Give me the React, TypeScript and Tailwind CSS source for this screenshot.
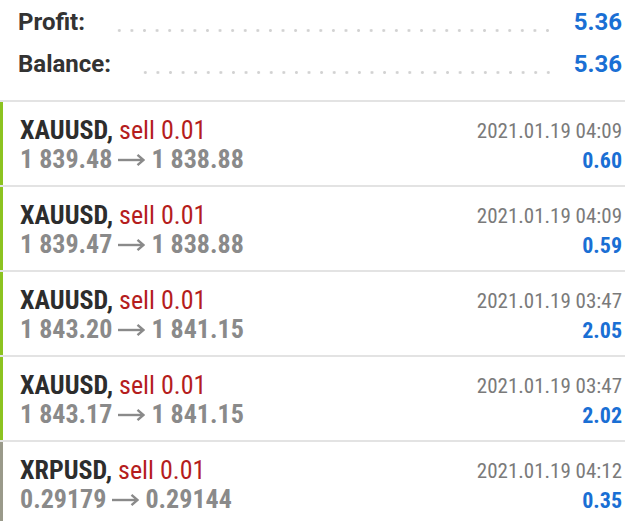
import React from "react";

const rows = [
  { sym: "XAUUSD", open: "1 839.48", close: "1 838.88", date: "2021.01.19 04:09", profit: "0.60", bar: "bg-[#8cc320]" },
  { sym: "XAUUSD", open: "1 839.47", close: "1 838.88", date: "2021.01.19 04:09", profit: "0.59", bar: "bg-[#8cc320]" },
  { sym: "XAUUSD", open: "1 843.20", close: "1 841.15", date: "2021.01.19 03:47", profit: "2.05", bar: "bg-[#8cc320]" },
  { sym: "XAUUSD", open: "1 843.17", close: "1 841.15", date: "2021.01.19 03:47", profit: "2.02", bar: "bg-[#8cc320]" },
  { sym: "XRPUSD", open: "0.29179", close: "0.29144", date: "2021.01.19 04:12", profit: "0.35", bar: "bg-[#9a9a8a]" },
];

function Dots() {
  return (
    <div className="flex-1 ml-[28px] mr-[24px] self-end mb-[8px] h-[3px] bg-[radial-gradient(circle,#d2d2d2_1.2px,transparent_1.7px)] bg-[length:12.6px_3px] bg-repeat-x" />
  );
}

function Arrow() {
  return (
    <svg width="27" height="14" viewBox="0 0 27 14" className="ml-[6px] mr-[6px] mt-[1px]" fill="none" stroke="#8a8a8a" strokeWidth="2.4" strokeLinecap="butt">
      <path d="M0 7H25" />
      <path d="M19.5 1.8L25.5 7L19.5 12.2" strokeLinejoin="miter" />
    </svg>
  );
}

export default function App() {
  return (
    <div className="w-[625px] h-[521px] bg-white overflow-hidden" style={{ fontFamily: "Roboto, 'Liberation Sans', sans-serif" }}>
      <div className="pl-[18px] pr-[3px] pt-[4px] h-[100px]">
        <div className="flex items-center h-[36px]">
          <span className="text-[24px] font-bold text-[#333]">Profit:</span>
          <Dots />
          <span className="text-[24px] font-bold text-[#1a6fd4]">5.36</span>
        </div>
        <div className="flex items-center h-[36px] mt-[6px]">
          <span className="text-[24px] font-bold text-[#333]">Balance:</span>
          <Dots />
          <span className="text-[24px] font-bold text-[#1a6fd4]">5.36</span>
        </div>
      </div>
      {rows.map((r, i) => (
        <div key={i} className="flex h-[85px] border-t-[2px] border-[#e3e3e3]">
          <div className={`w-[3px] ${r.bar}`} />
          <div className="flex-1 flex justify-between pl-[17px] pr-[3px] pt-[13px]" style={{ fontStretch: "condensed" }}>
            <div className="flex flex-col">
              <div className="text-[26px] leading-[30px]">
                <span className="font-bold text-[#2d2d2d]">{r.sym},</span>{" "}
                <span className="text-[#b51d1d]">sell 0.01</span>
              </div>
              <div className="text-[26px] leading-[28px] font-bold text-[#8a8a8a] flex items-center">
                <span>{r.open}</span>
                <Arrow />
                <span>{r.close}</span>
              </div>
            </div>
            <div className="flex flex-col items-end pt-[1px]">
              <div className="text-[21px] leading-[30px] text-[#7a7a7a]">{r.date}</div>
              <div className="text-[22px] leading-[30px] font-bold text-[#1a6fd4]">{r.profit}</div>
            </div>
          </div>
        </div>
      ))}
    </div>
  );
}
